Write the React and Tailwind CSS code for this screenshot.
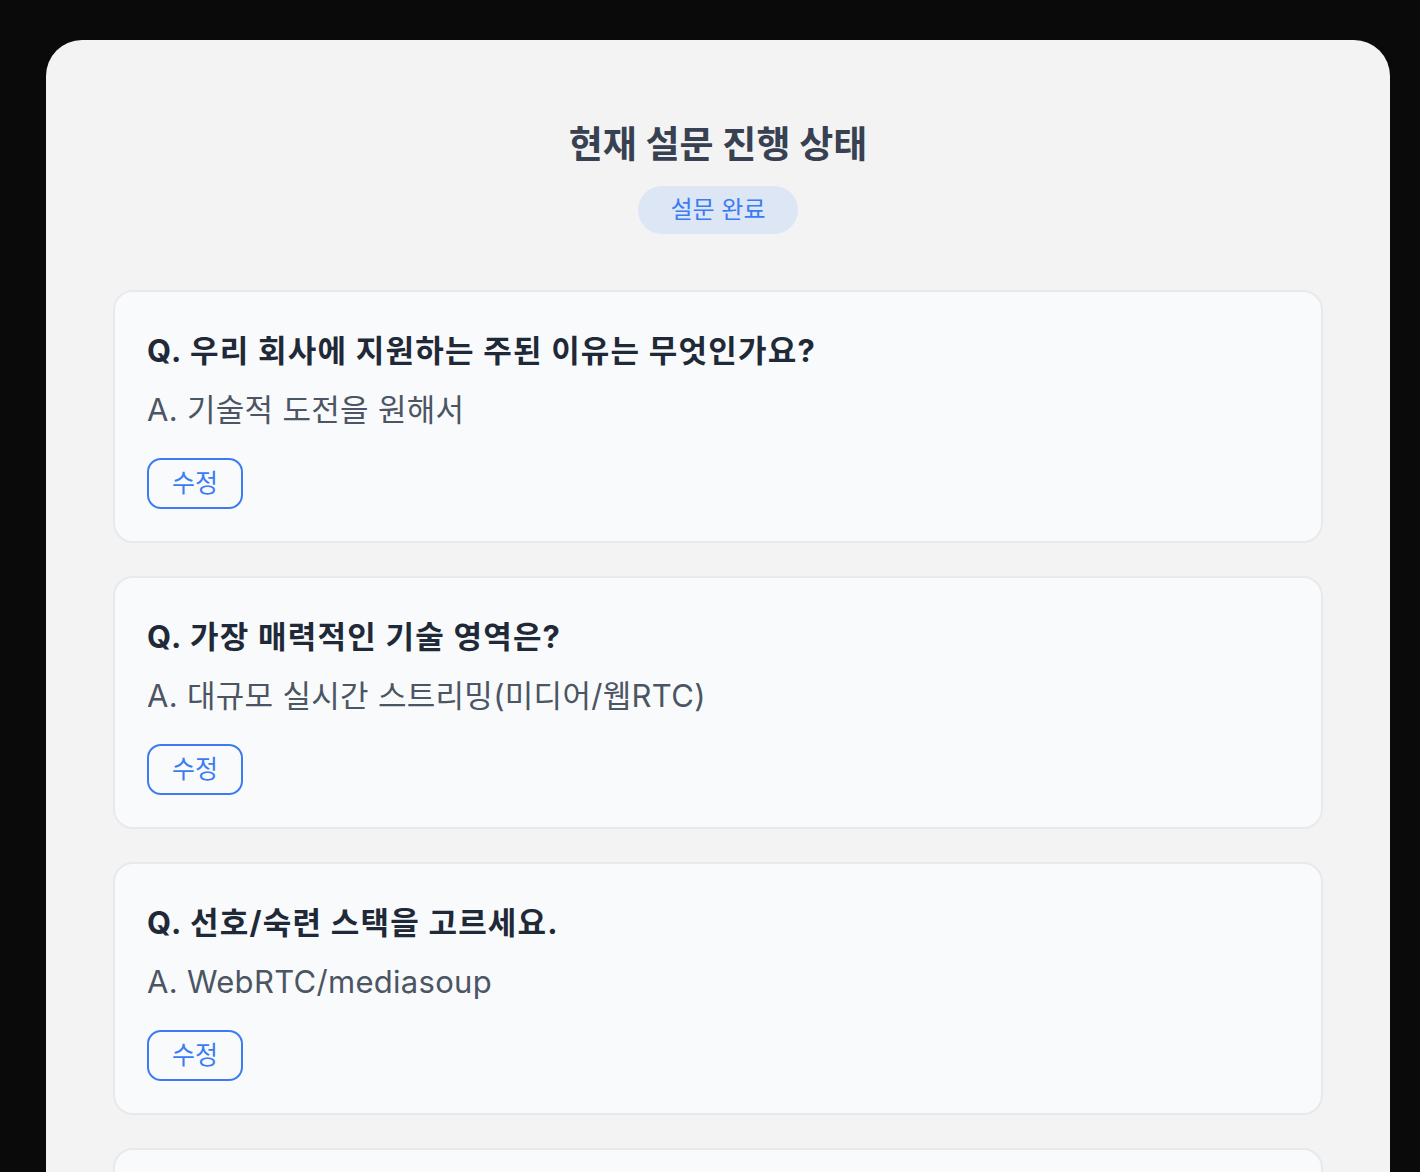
const FONT = { fontFamily: '"Inter", "Noto Sans CJK KR", sans-serif' };

const answers = [
  { id: 1, question: '우리 회사에 지원하는 주된 이유는 무엇인가요?', answer: '기술적 도전을 원해서' },
  { id: 2, question: '가장 매력적인 기술 영역은?', answer: '대규모 실시간 스트리밍(미디어/웹RTC)' },
  { id: 3, question: '선호/숙련 스택을 고르세요.', answer: 'WebRTC/mediasoup' },
];

const AnswerCard = ({ question, answer }) => (
  <div className="rounded-[20px] border-2 border-[#e8e9ec] bg-[#f9fafb] px-8 pt-[38px] pb-8">
    <p className="text-[31px] leading-[42px] font-bold tracking-[1.2px] text-[#1f2937]">Q. {question}</p>
    <p className="mt-[15px] text-[31px] leading-[45px] tracking-[0.3px] text-[#4b5563]">A. {answer}</p>
    <button className="mt-[26px] flex h-[51px] w-[96px] items-center justify-center rounded-[14px] border-2 border-[#3b7cf4] text-[25px] text-[#3b7cf4]">
      수정
    </button>
  </div>
);

export default function App() {
  return (
    <div className="h-screen overflow-hidden bg-[#0a0a0a] pt-10 pr-[30px] pl-[46px]" style={FONT}>
      <div className="rounded-[36px] bg-[#f3f3f3] px-[67px] pt-[84px] pb-16">
        <header className="flex flex-col items-center">
          <h1 className="text-[37px] leading-[42px] font-bold text-[#374151]">현재 설문 진행 상태</h1>
          <span className="mt-[20px] flex h-12 items-center rounded-full bg-[#dce6f5] px-8 text-[24px] text-[#3b7cf4]">
            설문 완료
          </span>
        </header>

        <div className="mt-[56px] flex flex-col gap-[33px]">
          {answers.map((item) => (
            <AnswerCard key={item.id} question={item.question} answer={item.answer} />
          ))}
          {/* next card, below the fold */}
          <div className="h-[253px] rounded-[20px] border-2 border-[#e8e9ec] bg-[#f9fafb]" />
        </div>
      </div>
    </div>
  );
}
